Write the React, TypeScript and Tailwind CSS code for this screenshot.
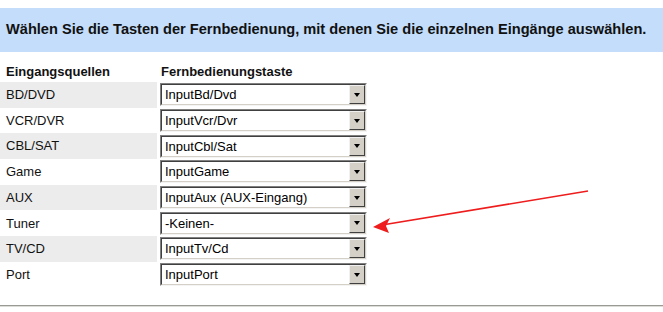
// Fernbedienung – Eingangs-Zuordnung (Windows-Classic-Look)

const ROWS: { source: string; key: string }[] = [
  { source: 'BD/DVD', key: 'InputBd/Dvd' },
  { source: 'VCR/DVR', key: 'InputVcr/Dvr' },
  { source: 'CBL/SAT', key: 'InputCbl/Sat' },
  { source: 'Game', key: 'InputGame' },
  { source: 'AUX', key: 'InputAux (AUX-Eingang)' },
  { source: 'Tuner', key: '-Keinen-' },
  { source: 'TV/CD', key: 'InputTv/Cd' },
  { source: 'Port', key: 'InputPort' },
]

function ClassicSelect({ value }: { value: string }) {
  return (
    <div className="w-[207px] h-[23px] border border-t-[#808080] border-l-[#808080] border-b-[#f4f4f4] border-r-[#f4f4f4]">
      <div className="h-full flex border border-t-[#404040] border-l-[#404040] border-b-[#d4d0c8] border-r-[#d4d0c8] bg-white">
        <span className="flex-1 pl-[3px] text-[13px] leading-[19px] text-black truncate">{value}</span>
        <div className="w-[16px] h-[19px] flex items-center justify-center bg-[#d4d0c8] border border-t-[#f0f0f0] border-l-[#f0f0f0] border-b-[#404040] border-r-[#404040]">
          <div className="w-0 h-0 border-l-[3.5px] border-r-[3.5px] border-t-[4px] border-l-transparent border-r-transparent border-t-black" />
        </div>
      </div>
    </div>
  )
}

export default function App() {
  return (
    <div className="relative w-[663px] h-[312px] bg-white font-['Liberation_Sans',Arial,sans-serif] text-[#111]">
      <div className="pt-[8px]">
        <div className="h-[44px] bg-[#c3ddfb] flex items-center pl-[6px]">
          <h1 className="text-[14.6px] font-bold text-[#111] whitespace-nowrap">
            Wählen Sie die Tasten der Fernbedienung, mit denen Sie die einzelnen Eingänge auswählen.
          </h1>
        </div>
      </div>

      <div className="mt-[10px] flex h-[20px] items-center text-[13px] font-bold">
        <span className="w-[160px] pl-[6px]">Eingangsquellen</span>
        <span className="pl-[1px]">Fernbedienungstaste</span>
      </div>

      <div>
        {ROWS.map((r, i) => (
          <div key={r.source} className="flex items-center h-[25.7px]">
            <div className={`w-[157px] h-full flex items-center pl-[6px] text-[13px] ${i % 2 === 0 ? 'bg-[#ececec]' : ''}`}>
              {r.source}
            </div>
            <div className="pl-[3px]">
              <ClassicSelect value={r.key} />
            </div>
          </div>
        ))}
      </div>

      <div className="mt-[17px] h-[2px] bg-[#9a9a94] border-b border-[#dcdcd8]" />

      {/* Hinweispfeil */}
      <svg className="absolute left-0 top-0" width="663" height="312" viewBox="0 0 663 312">
        <line x1="588" y1="191" x2="382" y2="225" stroke="#ee1c1c" strokeWidth="1.6" />
        <polygon points="373,227 390,218 386,226 389,233" fill="#ee1c1c" />
      </svg>
    </div>
  )
}
